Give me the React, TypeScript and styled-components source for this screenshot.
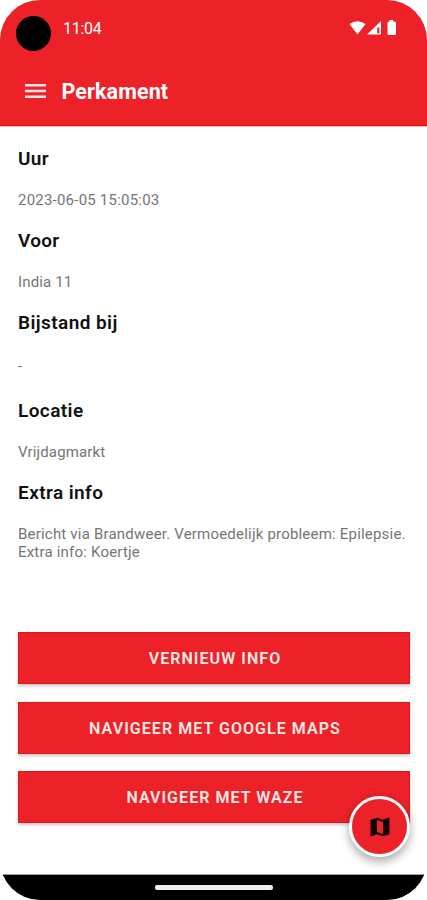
import React from "react";
import styled, { createGlobalStyle } from "styled-components";

const RED = "#ed2228";

const GlobalStyle = createGlobalStyle`
  * { box-sizing: border-box; }
  body { margin: 0; background: #fff; font-family: Roboto, "Liberation Sans", sans-serif; }
`;

const Phone = styled.div`
  position: relative;
  display: flex;
  flex-direction: column;
  width: 427px;
  height: 900px;
  overflow: hidden;
  border-radius: 40px;
  background: #fff;
`;

const Header = styled.header`
  flex: none;
  height: 126px;
  background: ${RED};
  color: #fff;
  box-shadow: inset 0 -1px 0 #dc1015, 0 1px 0 #f7b5b7;
`;

const StatusBar = styled.div`
  display: flex;
  align-items: flex-start;
  height: 64px;
  padding: 16px 28px 0 16px;
`;

const Camera = styled.div`
  width: 35px;
  height: 35px;
  border-radius: 50%;
  background: #000;
`;

const Clock = styled.time`
  margin: 3px 0 0 12px;
  font-size: 16px;
  line-height: 20px;
  letter-spacing: -0.3px;
`;

const StatusIcons = styled.svg`
  margin: 3px 0 0 auto;
  width: 51px;
  height: 18px;
`;

const AppBar = styled.div`
  display: flex;
  align-items: center;
  height: 54px;
  padding-left: 25px;
`;

const MenuIcon = styled.svg`
  width: 21px;
  height: 14px;
`;

const AppTitle = styled.h1`
  margin: 1px 0 0 15.5px;
  font-size: 21.5px;
  line-height: 28px;
  font-weight: 700;
  letter-spacing: 0.1px;
`;

const Content = styled.main`
  flex: 1;
  padding: 21px 17px 0 18px;
`;

const Details = styled.dl`
  height: 485px;
  margin: 0;
`;

const Label = styled.dt<{ $spacing: number }>`
  font-size: 19px;
  line-height: 24px;
  font-weight: 600;
  letter-spacing: ${(p) => p.$spacing}px;
  color: #111;
`;

const Value = styled.dd<{ $tall?: boolean; $spacing: number }>`
  margin: 0;
  padding-top: ${(p) => (p.$tall ? 22 : 20)}px;
  height: ${(p) => (p.$tall ? 64 : 58)}px;
  font-size: 15px;
  line-height: 18px;
  letter-spacing: ${(p) => p.$spacing}px;
  font-weight: 400;
  color: #757575;
  white-space: pre-line;
`;

const Actions = styled.div`
  display: flex;
  flex-direction: column;
  gap: 17.5px;
`;

const ActionButton = styled.button<{ $spacing: number }>`
  height: 52px;
  padding: 2px 0 0 2px;
  border: 0;
  background: ${RED};
  color: #ffe9e9;
  font: 600 16px/20px Roboto, "Liberation Sans", sans-serif;
  letter-spacing: ${(p) => p.$spacing}px;
  box-shadow: inset 0 0 0 1px #e0151b, 0 2px 3px rgba(0, 0, 0, 0.22);
`;

const MapButton = styled.button`
  position: absolute;
  left: 349px;
  top: 796px;
  display: grid;
  place-items: center;
  width: 61px;
  height: 61px;
  padding: 0;
  border: 3px solid #fff;
  border-radius: 50%;
  background: ${RED};
  box-shadow: 0 5px 9px rgba(0, 0, 0, 0.26), 0 2px 14px rgba(0, 0, 0, 0.1);
`;

const NavigationBar = styled.footer`
  display: flex;
  flex: none;
  justify-content: center;
  height: 25px;
  padding-top: 10px;
  background: #000;
  box-shadow: 0 -1px 0 #999;
`;

const HomeHandle = styled.div`
  width: 118px;
  height: 5px;
  border-radius: 2px;
  background: #eee;
`;

const details = [
  { label: "Uur", value: "2023-06-05 15:05:03", ls: 0.3, vs: 0.22 },
  { label: "Voor", value: "India 11", ls: 0.3, vs: 0.15 },
  { label: "Bijstand bij", value: "-", tall: true, ls: 0.42, vs: 0 },
  { label: "Locatie", value: "Vrijdagmarkt", ls: 0.42, vs: 0.15 },
  {
    label: "Extra info",
    value: "Bericht via Brandweer. Vermoedelijk probleem: Epilepsie.\nExtra info: Koertje",
    ls: 0.42,
    vs: 0.2,
  },
];

const actions = [
  { text: "VERNIEUW INFO", spacing: 1.05 },
  { text: "NAVIGEER MET GOOGLE MAPS", spacing: 1.05 },
  { text: "NAVIGEER MET WAZE", spacing: 1.05 },
];

export default function App() {
  return (
    <>
      <GlobalStyle />
      <Phone>
        <Header>
          <StatusBar>
            <Camera />
            <Clock>11:04</Clock>
            <StatusIcons viewBox="0 0 51 18" fill="#fff" aria-hidden="true">
              <path d="M1.5 5Q9.5-.5 17.5 5L9.5 15.5Z" />
              <path d="M33 2V15.5H19Z" />
              <path d="M29.2 8.5H31.3V14.2H29.2Z" fill={RED} />
              <path d="M41.5 2.5V1H45V2.5H46.5Q48 2.5 48 4V14.5Q48 16 46.5 16H41Q39.5 16 39.5 14.5V4Q39.5 2.5 41 2.5Z" />
            </StatusIcons>
          </StatusBar>
          <AppBar>
            <MenuIcon viewBox="0 0 21 14" fill="#ffe5e5" aria-label="Menu">
              <path d="M0 0H21V2.4H0ZM0 5.8H21V8.2H0ZM0 11.6H21V14H0Z" />
            </MenuIcon>
            <AppTitle>Perkament</AppTitle>
          </AppBar>
        </Header>
        <Content>
          <Details>
            {details.map((d) => (
              <React.Fragment key={d.label}>
                <Label $spacing={d.ls}>{d.label}</Label>
                <Value $tall={d.tall} $spacing={d.vs}>{d.value}</Value>
              </React.Fragment>
            ))}
          </Details>
          <Actions>
            {actions.map((a) => (
              <ActionButton key={a.text} $spacing={a.spacing}>{a.text}</ActionButton>
            ))}
          </Actions>
        </Content>
        <NavigationBar>
          <HomeHandle />
        </NavigationBar>
        <MapButton aria-label="Kaart">
          <svg width="20" height="20" viewBox="0 0 20 20" fill="#140303">
            <path
              fillRule="evenodd"
              d="M19.5.5 19.1.6 13 2.8 7 .7 1 2.7Q.5 2.9.5 3.4V19Q.5 19.6 1.1 19.5L7 17.2 13 19.3 19 17.3Q19.5 17.1 19.5 16.6V1Q19.5.5 19 .5ZM7 3 13 5.1V17L7 14.9Z"
            />
          </svg>
        </MapButton>
      </Phone>
    </>
  );
}
